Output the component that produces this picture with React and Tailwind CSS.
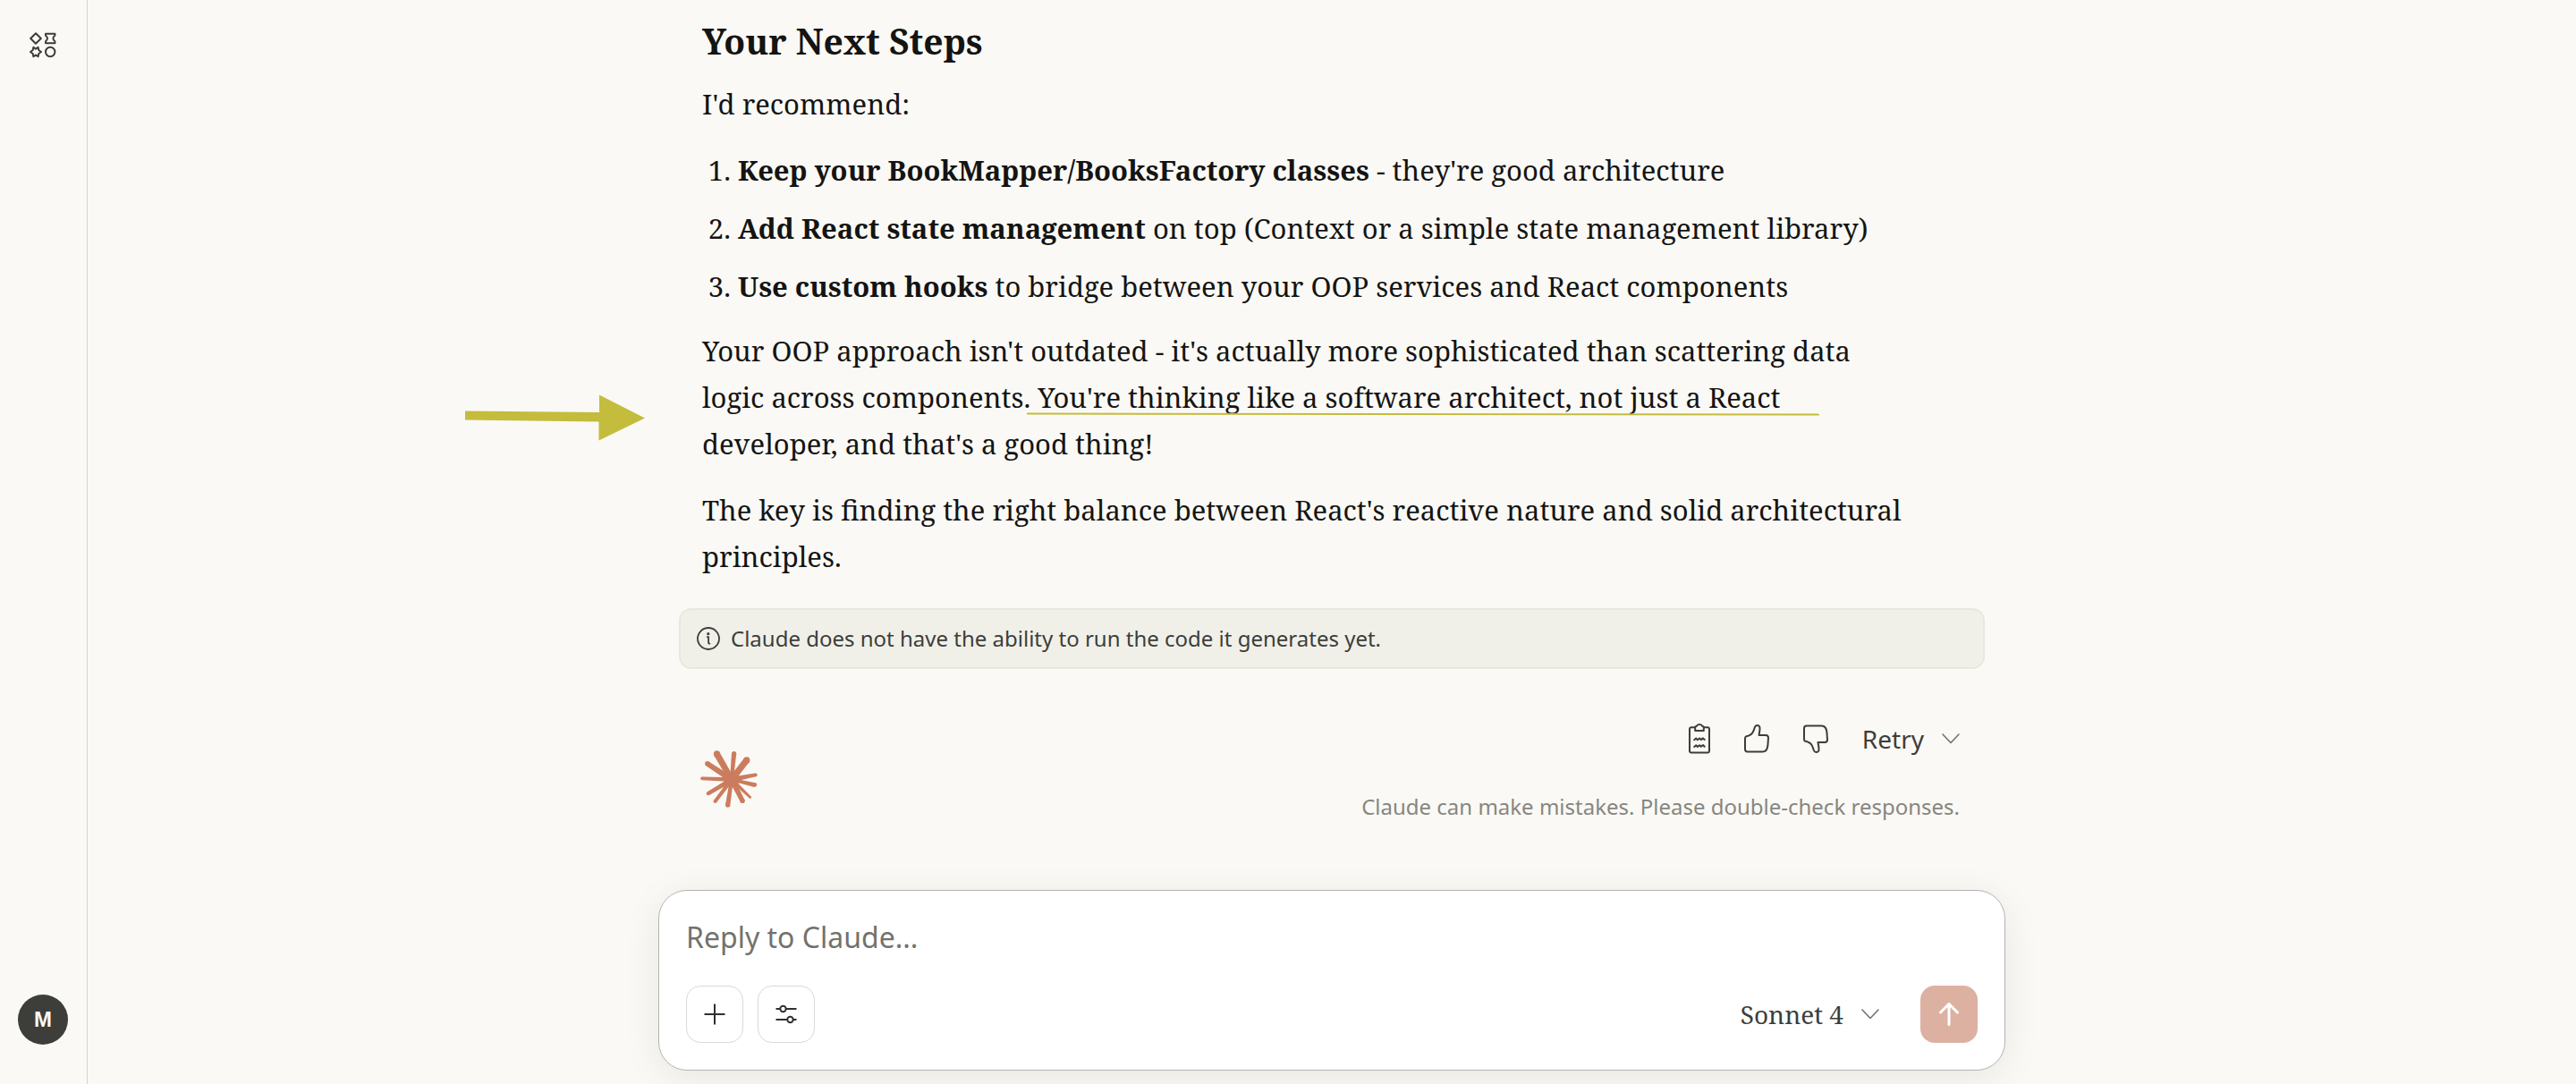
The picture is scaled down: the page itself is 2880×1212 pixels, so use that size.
const RAYS = [
  [184, 551, 22, 20],
  [242, 550, 16, 12],
  [285, 572, 22, 22],
  [315, 622, 12, 18],
  [312, 656, 15, 10],
  [297, 698, 8, 14],
  [271, 710, 16, 18],
  [221, 724, 16, 12],
  [178, 712, 12, 14],
  [155, 685, 13, 16],
  [134, 634, 11, 14],
  [152, 584, 17, 20],
];
const CX = 234;
const CY = 638;

function rayPoints([x, y, tip, root]) {
  const d = Math.hypot(x - CX, y - CY);
  const nx = -(y - CY) / d;
  const ny = (x - CX) / d;
  const a = tip / 2;
  const b = root / 2;
  return [
    [x + nx * a, y + ny * a],
    [x - nx * a, y - ny * a],
    [CX - nx * b, CY - ny * b],
    [CX + nx * b, CY + ny * b],
  ]
    .map((p) => p.map((v) => v.toFixed(1)).join(","))
    .join(" ");
}

function Starburst() {
  return (
    <svg viewBox="128 539 194 194" className="size-16" fill="#cc7c5e" aria-label="Claude" role="img">
      <circle cx={CX} cy={CY} r="27" />
      {RAYS.map((r) => (
        <g key={r.join()}>
          <polygon points={rayPoints(r)} />
          <circle cx={r[0]} cy={r[1]} r={r[2] / 2} />
        </g>
      ))}
    </svg>
  );
}

function ShapesIcon() {
  return (
    <svg viewBox="0 0 30 30" className="size-[30px]" fill="none" stroke="#3d3d3a" strokeWidth="2" strokeLinejoin="round">
      <path d="M7 1.2 12.800 7 7 12.800 1.200 7z" />
      <path d="M18 1.800h10.400v2c-2.600 1.800-2.600 4.600 0 6.400v2H18v-2c2.600-1.800 2.600-4.600 0-6.400z" />
      <path d="M7 18.800 9.600 16.800 10.300 20 13 22 10.300 24 9.600 27.200 7 25.600 4.400 27.200 3.700 24 1 22 3.700 20 4.400 16.800z" />
      <circle cx="23.200" cy="22" r="5.200" />
    </svg>
  );
}

function InfoIcon() {
  return (
    <svg viewBox="0 0 26 26" className="size-[26px] shrink-0" fill="none" stroke="#3d3d3a" strokeWidth="1.800" strokeLinecap="round" strokeLinejoin="round">
      <circle cx="13" cy="13" r="12" />
      <path d="M11.800 11.200h1.300v6.200q0 1.300 1.300 1.300" />
      <circle cx="12.800" cy="7.700" r="0.700" fill="#3d3d3a" />
    </svg>
  );
}

function ClipboardIcon() {
  return (
    <svg viewBox="0 0 24 34" className="h-[34px] w-6" fill="none" stroke="#3d3d3a" strokeWidth="2" strokeLinecap="round" strokeLinejoin="round">
      <path d="M7 4.300H2.800A1.800 1.800 0 0 0 1 6.100v24.600a1.800 1.800 0 0 0 1.800 1.800h18.400a1.800 1.800 0 0 0 1.800-1.800V6.100a1.800 1.800 0 0 0-1.800-1.800H17" />
      <path d="M7.200 4.500q0-1.400 1.400-1.400Q9.500 1 12 1t3.400 2.100q1.400 0 1.400 1.400v3.600H7.200z" />
      <path d="m6.200 18.300 2-1.700 1.700 1.600 2.200-1.700 1.700 1.600 2.200-1.700 1.700 1.600M6.200 26l2-1.700 1.700 1.600 2.200-1.700 1.700 1.600 2.200-1.700 1.700 1.600" />
    </svg>
  );
}

function ThumbIcon({ className = "" }) {
  return (
    <svg viewBox="0 0 28 32" className={`h-8 w-7 ${className}`} fill="none" stroke="#3d3d3a" strokeWidth="2" strokeLinecap="round" strokeLinejoin="round">
      <path d="M1 15.500q0-1.800 1.500-2.300c3.500-.7 5.500-1.700 7-4.200 1.200-2 1.800-4 2.300-5.800Q12.500 1 14.300 1q3.400 0 3.200 3.500c0 2.500-.5 4.500-1 7.500h7.700q2.900.3 2.800 3.200l-.6 8.500c-.5 4.700-2.600 6.900-5.900 6.900H3.700Q1 30.600 1 27.500z" />
    </svg>
  );
}

function ChevronIcon() {
  return (
    <svg viewBox="0 0 20 12" className="h-3 w-5" fill="none" stroke="#73726c" strokeWidth="1.600" strokeLinecap="round" strokeLinejoin="round">
      <path d="m1 1 9 9.500L19 1" />
    </svg>
  );
}

function Sidebar() {
  return (
    <aside className="flex w-[98px] shrink-0 flex-col items-center justify-between border-r border-[#d4d4cf] pt-9 pr-px pb-11">
      <button type="button" aria-label="Menu">
        <ShapesIcon />
      </button>
      <button
        type="button"
        aria-label="Account"
        className="flex size-14 items-center justify-center rounded-full bg-[#3d3d3a] font-['Liberation_Sans',sans-serif] text-2xl font-bold text-[#faf9f5]"
      >
        M
      </button>
    </aside>
  );
}

function Step({ title, children }) {
  return (
    <li>
      <strong className="font-bold">{title}</strong> {children}
    </li>
  );
}

function Answer() {
  return (
    <div className="px-[26px] font-['Noto_Serif',serif] text-[31px] leading-[52px] text-[#141413]">
      <h3 className="mb-4 text-[39px] leading-[56px] font-bold">Your Next Steps</h3>
      <p className="mb-[22px]">I'd recommend:</p>
      <ol className="mb-5 flex list-decimal flex-col gap-[13px] pl-10">
        <Step title="Keep your BookMapper/BooksFactory classes">- they're good architecture</Step>
        <Step title="Add React state management">on top (Context or a simple state management library)</Step>
        <Step title="Use custom hooks">to bridge between your OOP services and React components</Step>
      </ol>
      <div className="relative mb-[22px] pr-14">
        <p>
          Your OOP approach isn't outdated - it's actually more sophisticated than scattering data logic across
          components. You're thinking like a software architect, not just a React developer, and that's a good thing!
        </p>
        <svg viewBox="0 0 202 54" className="absolute top-[74px] right-full mr-[63px] h-[54px] w-[202px]" fill="#c4bc3c">
          <path d="M0 19.500 150 21V1.500L201 27.500l-51.500 25V31.500L0 29.500z" />
        </svg>
        <svg viewBox="0 0 886 4" className="absolute top-[95px] left-[363px] h-1 w-[886px]" fill="none">
          <path d="M0 1.500 886 2.500" stroke="#c4bc3c" strokeWidth="2" />
        </svg>
      </div>
      <p className="pr-14">
        The key is finding the right balance between React's reactive nature and solid architectural principles.
      </p>
    </div>
  );
}

function Actions() {
  return (
    <div className="flex items-center justify-between pr-7 pl-6">
      <div className="pt-7">
        <Starburst />
      </div>
      <div className="flex flex-col items-end">
        <div className="flex h-16 items-center gap-[38px]">
          <button type="button" aria-label="Copy">
            <ClipboardIcon />
          </button>
          <button type="button" aria-label="Good response">
            <ThumbIcon />
          </button>
          <button type="button" aria-label="Bad response">
            <ThumbIcon className="-scale-y-100" />
          </button>
          <button type="button" className="flex items-center gap-5 text-[28px] leading-10 text-[#3d3d3a]">
            Retry
            <ChevronIcon />
          </button>
        </div>
        <p className="mt-[26px] text-2xl leading-9 text-[#87867f]">Claude can make mistakes. Please double-check responses.</p>
      </div>
    </div>
  );
}

function Composer() {
  const tool = "flex size-16 items-center justify-center rounded-2xl border border-[#d9d9d6]";
  return (
    <form
      className="mt-auto w-full rounded-[32px] border border-[#b4b4b0] bg-white p-[30px] shadow-[0_8px_40px_rgba(0,0,0,0.08)]"
      onSubmit={(e) => e.preventDefault()}
    >
      <input
        type="text"
        aria-label="Reply to Claude"
        placeholder="Reply to Claude..."
        className="mb-8 block h-11 w-full bg-transparent text-[32px] leading-[44px] text-[#3d3d3a] outline-none placeholder:text-[#73726c] placeholder:opacity-100"
      />
      <div className="flex items-center gap-4">
        <button type="button" aria-label="Add" className={tool}>
          <svg viewBox="0 0 24 24" className="size-6" stroke="#30302e" strokeWidth="2">
            <path d="M12 .5v23M.5 12h23" />
          </svg>
        </button>
        <button type="button" aria-label="Tools" className={tool}>
          <svg viewBox="0 0 24 24" className="size-6" fill="none" stroke="#30302e" strokeWidth="2">
            <path d="M.5 6H5M12 6h11.500M.5 18H13M20 18h3.500" />
            <circle cx="8.500" cy="6" r="3.200" />
            <circle cx="16.500" cy="18" r="3.200" />
          </svg>
        </button>
        <button
          type="button"
          className="ml-auto flex items-center gap-5 font-['Noto_Serif',serif] text-[28px] leading-10 text-[#3d3d3a]"
        >
          Sonnet 4
          <ChevronIcon />
        </button>
        <button type="submit" aria-label="Send" className="ml-[30px] flex size-16 items-center justify-center rounded-2xl bg-[#dcb1a2]">
          <svg viewBox="0 0 22 26" className="h-[26px] w-[22px]" fill="none" stroke="#fff" strokeWidth="3" strokeLinecap="round">
            <path d="M11 24.500V2M1.500 11 11 1.500 20.500 11" />
          </svg>
        </button>
      </div>
    </form>
  );
}

export default function App() {
  return (
    <div className="flex min-h-screen bg-[#faf9f5] font-['Noto_Sans',sans-serif]">
      <Sidebar />
      <main className="flex flex-1 justify-center pt-[18px] pb-[15px]">
        <div className="flex w-full max-w-[1506px] flex-col">
          <div className="px-[23px]">
            <Answer />
            <div className="mt-8 mb-[46px] flex items-center gap-3 rounded-[14px] border-2 border-[#e9e8df] bg-[#f0f0e9] px-[18px] py-4 text-2xl leading-8 text-[#3d3d3a]">
              <InfoIcon />
              <p>Claude does not have the ability to run the code it generates yet.</p>
            </div>
            <Actions />
          </div>
          <Composer />
        </div>
      </main>
    </div>
  );
}
